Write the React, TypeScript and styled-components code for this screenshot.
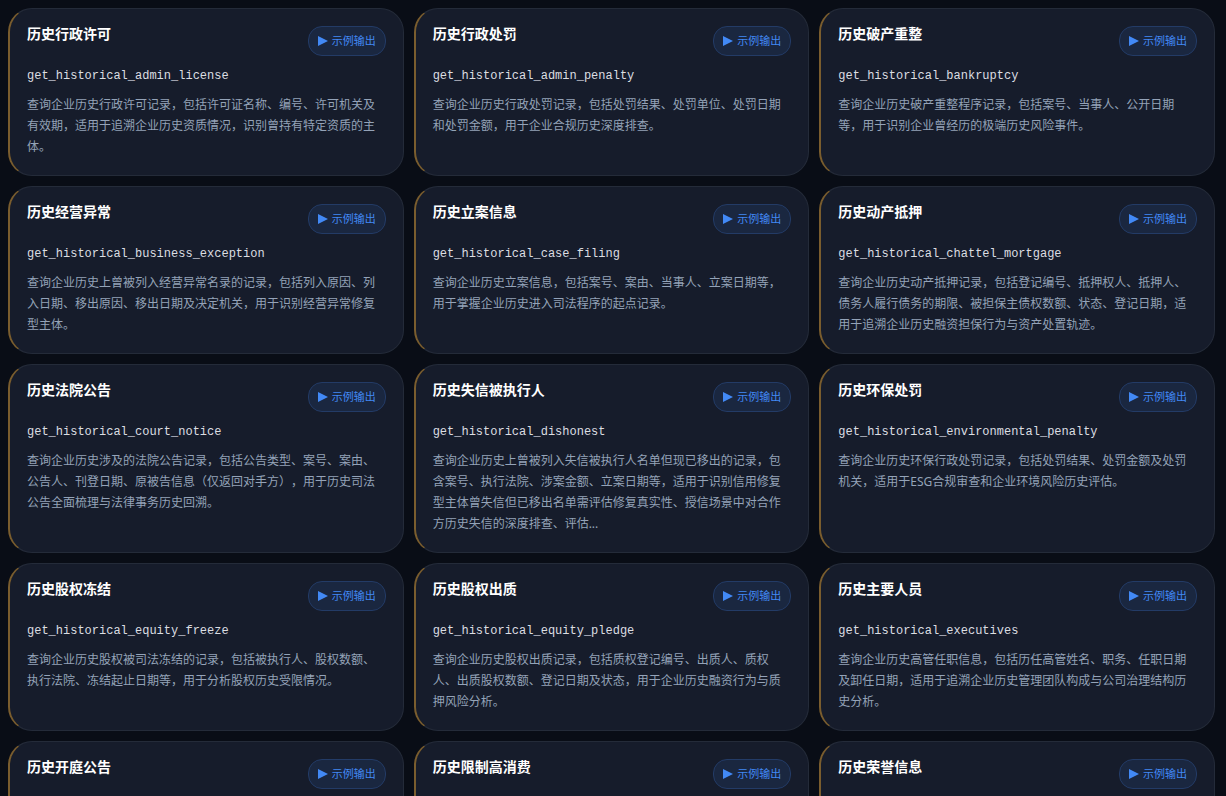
import React from "react";
import styled, { createGlobalStyle } from "styled-components";

const sans = `"Noto Sans", "Noto Sans CJK SC", sans-serif`;

const GlobalStyle = createGlobalStyle`
  *, *::before, *::after { box-sizing: border-box; }
  html { background: #090d16; }
  body { margin: 0; overflow: hidden; font-family: ${sans}; text-spacing-trim: space-all; }
`;

const Grid = styled.main`
  display: grid;
  grid-template-columns: repeat(3, minmax(0, 1fr));
  gap: 10px;
  padding: 8px 11px 8px 8px;
`;

const Card = styled.article`
  display: flex;
  flex-direction: column;
  padding: 17px 17px 18px;
  background: #161c2b;
  border: 1px solid #242b39;
  border-left: 2px solid #7a5d2e;
  border-radius: 24px;
`;

const CardHead = styled.header`
  display: flex;
  justify-content: space-between;
  align-items: flex-start;
  gap: 8px;
  margin-bottom: 8px;
`;

const Title = styled.h3`
  margin: 0;
  font-size: 14px;
  line-height: 15px;
  font-weight: 700;
  color: #ffffff;
`;

const SampleButton = styled.button`
  display: inline-flex;
  align-items: center;
  gap: 4px;
  height: 30px;
  padding: 0 9px;
  font-family: ${sans};
  font-size: 11px;
  line-height: 16px;
  color: #4289f5;
  background: #1a2740;
  border: 1px solid #233b66;
  border-radius: 14px;
  cursor: pointer;
`;

const ToolName = styled.code`
  margin-bottom: 6px;
  font-family: "Liberation Mono", monospace;
  font-size: 12px;
  line-height: 24px;
  color: #dcdee2;
`;

const Description = styled.p`
  margin: 0;
  font-size: 12px;
  line-height: 21px;
  color: #94a3b8;
`;

interface Tool {
  title: string;
  name: string;
  text: string;
}

const tools: Tool[] = [
  { title: "历史行政许可", name: "get_historical_admin_license", text: "查询企业历史行政许可记录，包括许可证名称、编号、许可机关及有效期，适用于追溯企业历史资质情况，识别曾持有特定资质的主体。" },
  { title: "历史行政处罚", name: "get_historical_admin_penalty", text: "查询企业历史行政处罚记录，包括处罚结果、处罚单位、处罚日期和处罚金额，用于企业合规历史深度排查。" },
  { title: "历史破产重整", name: "get_historical_bankruptcy", text: "查询企业历史破产重整程序记录，包括案号、当事人、公开日期等，用于识别企业曾经历的极端历史风险事件。" },
  { title: "历史经营异常", name: "get_historical_business_exception", text: "查询企业历史上曾被列入经营异常名录的记录，包括列入原因、列入日期、移出原因、移出日期及决定机关，用于识别经营异常修复型主体。" },
  { title: "历史立案信息", name: "get_historical_case_filing", text: "查询企业历史立案信息，包括案号、案由、当事人、立案日期等，用于掌握企业历史进入司法程序的起点记录。" },
  { title: "历史动产抵押", name: "get_historical_chattel_mortgage", text: "查询企业历史动产抵押记录，包括登记编号、抵押权人、抵押人、债务人履行债务的期限、被担保主债权数额、状态、登记日期，适用于追溯企业历史融资担保行为与资产处置轨迹。" },
  { title: "历史法院公告", name: "get_historical_court_notice", text: "查询企业历史涉及的法院公告记录，包括公告类型、案号、案由、公告人、刊登日期、原被告信息（仅返回对手方），用于历史司法公告全面梳理与法律事务历史回溯。" },
  { title: "历史失信被执行人", name: "get_historical_dishonest", text: "查询企业历史上曾被列入失信被执行人名单但现已移出的记录，包含案号、执行法院、涉案金额、立案日期等，适用于识别信用修复型主体曾失信但已移出名单需评估修复真实性、授信场景中对合作方历史失信的深度排查、评估..." },
  { title: "历史环保处罚", name: "get_historical_environmental_penalty", text: "查询企业历史环保行政处罚记录，包括处罚结果、处罚金额及处罚机关，适用于ESG合规审查和企业环境风险历史评估。" },
  { title: "历史股权冻结", name: "get_historical_equity_freeze", text: "查询企业历史股权被司法冻结的记录，包括被执行人、股权数额、执行法院、冻结起止日期等，用于分析股权历史受限情况。" },
  { title: "历史股权出质", name: "get_historical_equity_pledge", text: "查询企业历史股权出质记录，包括质权登记编号、出质人、质权人、出质股权数额、登记日期及状态，用于企业历史融资行为与质押风险分析。" },
  { title: "历史主要人员", name: "get_historical_executives", text: "查询企业历史高管任职信息，包括历任高管姓名、职务、任职日期及卸任日期，适用于追溯企业历史管理团队构成与公司治理结构历史分析。" },
  { title: "历史开庭公告", name: "get_historical_hearing_notice", text: "查询企业历史开庭公告记录，包括案号、案由、当事人、开庭日期等。" },
  { title: "历史限制高消费", name: "get_historical_high_consumption", text: "查询企业历史限制高消费记录，包括案号、限制对象、立案日期等。" },
  { title: "历史荣誉信息", name: "get_historical_honor", text: "查询企业历史荣誉信息，包括荣誉名称、级别、发布日期等。" },
];

export default function App() {
  return (
    <>
      <GlobalStyle />
      <Grid>
        {tools.map((tool) => (
          <Card key={tool.name}>
            <CardHead>
              <Title>{tool.title}</Title>
              <SampleButton type="button">
                <svg width="10" height="10" viewBox="0 0 10 10" aria-hidden="true">
                  <path d="M0 0L10 5L0 10Z" fill="currentColor" />
                </svg>
                示例输出
              </SampleButton>
            </CardHead>
            <ToolName>{tool.name}</ToolName>
            <Description>{tool.text}</Description>
          </Card>
        ))}
      </Grid>
    </>
  );
}
